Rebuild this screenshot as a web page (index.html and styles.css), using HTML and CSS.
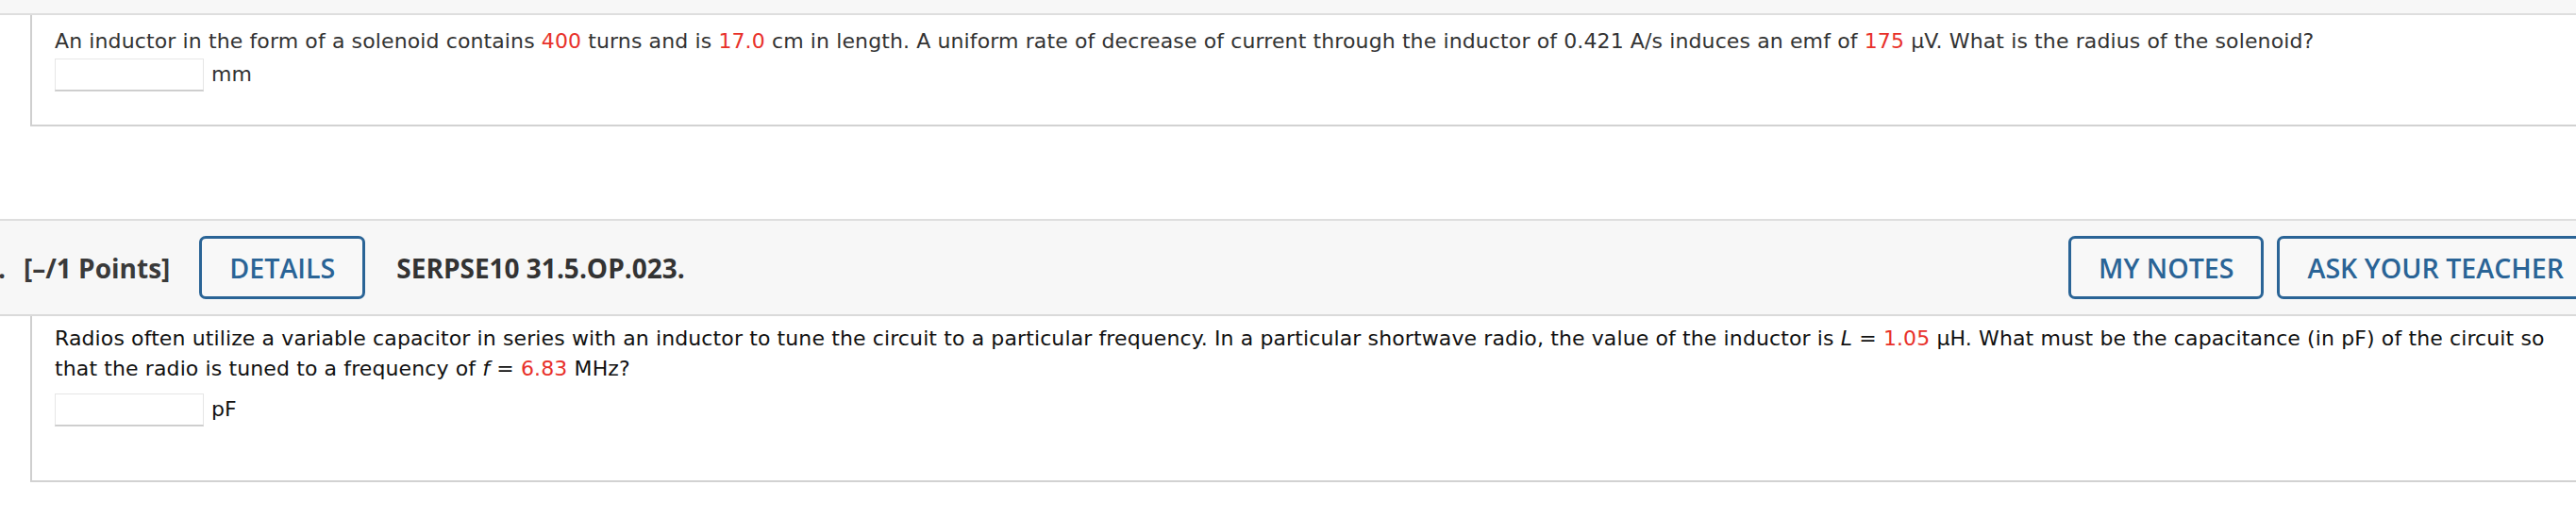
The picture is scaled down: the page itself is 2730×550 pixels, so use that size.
FILE: index.html
```html
<!DOCTYPE html>
<html>
<head>
<meta charset="utf-8">
<link rel="stylesheet" href="styles.css">
</head>
<body>
<div class="topbar"></div>
<div class="qbody q1">
  <div class="qtext">An inductor in the form of a solenoid contains <span class="red">400</span> turns and is <span class="red">17.0</span> cm in length. A uniform rate of decrease of current through the inductor of 0.421 A/s induces an emf of <span class="red">175</span> µV. What is the radius of the solenoid?</div>
  <div class="answer"><span class="field"></span><span class="unit">mm</span></div>
</div>

<div class="qhead">
  <span class="qnum">.</span>
  <span class="points">[–/1 Points]</span>
  <span class="btn btn-details">DETAILS</span>
  <span class="qid">SERPSE10 31.5.OP.023.</span>
  <div class="actions">
    <span class="btn">MY NOTES</span>
    <span class="btn">ASK YOUR TEACHER</span>
  </div>
</div>
<div class="qbody q2">
  <div class="qtext dark">Radios often utilize a variable capacitor in series with an inductor to tune the circuit to a particular frequency. In a particular shortwave radio, the value of the inductor is <i>L</i> = <span class="red">1.05</span> µH. What must be the capacitance (in pF) of the circuit so that the radio is tuned to a frequency of <i>f</i> = <span class="red">6.83</span> MHz?</div>
  <div class="answer"><span class="field"></span><span class="unit dark">pF</span></div>
</div>
</body>
</html>
```
FILE: styles.css
```css
html, body {
  margin: 0;
  padding: 0;
  background: #ffffff;
}
body {
  font-family: "DejaVu Sans", Verdana, sans-serif;
  font-size: 22px;
  color: #333333;
  overflow: hidden;
}
.topbar {
  height: 14px;
  background: #f7f7f7;
  border-bottom: 2px solid #dedede;
}
.qbody {
  margin-left: 32px;
  border-left: 2px solid #cfcfcf;
  border-bottom: 2px solid #d2d2d2;
  padding-left: 24px;
  padding-right: 12px;
  line-height: 32px;
  letter-spacing: 0.115px;
}
.q1 {
  padding-top: 12px;
  padding-bottom: 36px;
}
.q2 {
  padding-top: 8px;
  padding-bottom: 58px;
}
.qtext i {
  font-style: italic;
}
.dark {
  color: #111111;
}
.red {
  color: #e8312a;
}
.answer {
  display: flex;
  align-items: center;
  gap: 8px;
}
.q1 .answer {
  margin-top: 2px;
}
.q2 .answer {
  margin-top: 10px;
}
.field {
  display: block;
  width: 156px;
  height: 32px;
  background: #ffffff;
  border: 1px solid #e6e6e6;
  border-bottom-color: #c9c9c9;
  box-shadow: 0 1px 0 #d6d6d6;
}
.unit {
  line-height: 32px;
}
.qhead {
  margin-top: 98px;
  height: 99px;
  background: #f7f7f7;
  border-top: 2px solid #dedede;
  border-bottom: 2px solid #dadada;
  display: flex;
  align-items: center;
  font-family: "Open Sans", sans-serif;
  color: #3a3a3a;
}
.qnum {
  font-weight: 700;
  font-size: 28px;
  margin-left: -2px;
  width: 27px;
}
.points {
  font-weight: 700;
  font-size: 28px;
}
.qid {
  font-weight: 700;
  font-size: 28px;
  margin-left: 33px;
  color: #333333;
}
.btn {
  box-sizing: border-box;
  height: 67px;
  display: inline-flex;
  align-items: center;
  flex-shrink: 0;
  padding: 0 29px;
  border: 3px solid #2a6496;
  border-radius: 7px;
  color: #2a6496;
  font-family: "Open Sans", sans-serif;
  font-weight: 600;
  font-size: 28.6px;
  background: #f8f8f8;
  white-space: nowrap;
}
.btn-details {
  margin-left: 31px;
}
.actions {
  margin-left: auto;
  margin-right: -19px;
  display: flex;
  gap: 14px;
}
```
